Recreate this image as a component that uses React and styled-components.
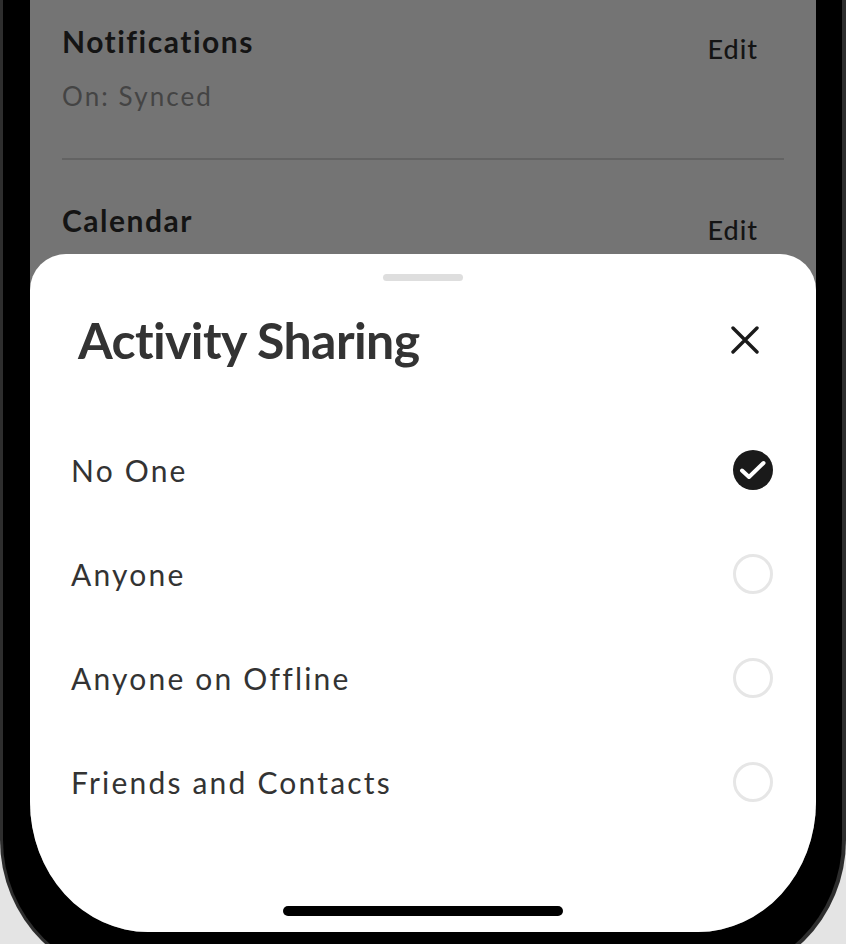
import styled, { createGlobalStyle } from "styled-components";

const GlobalStyle = createGlobalStyle`
  html, body {
    margin: 0;
    padding: 0;
    background: #e4e4e4;
    overflow: hidden;
    font-family: "Lato", "Noto Sans", sans-serif;
  }
`;

const Phone = styled.div`
  width: 846px;
  height: 983px;
  box-sizing: border-box;
  padding: 0 4px 4px 3px;
  background: #2e2e2e;
  border-radius: 0 0 143px 143px;
`;

const Bezel = styled.div`
  height: 100%;
  box-sizing: border-box;
  padding: 0 26px 47px 27px;
  background: #000;
  border-radius: 0 0 139px 139px;
`;

const Screen = styled.div`
  height: 100%;
  display: flex;
  flex-direction: column;
  background: #747474;
  border-radius: 0 0 118px 118px / 0 0 130px 130px;
  overflow: hidden;
`;

const SettingsList = styled.div`
  height: 254px;
  flex-shrink: 0;
  overflow: hidden;
  padding: 0 32px;
`;

const SettingRow = styled.div`
  display: flex;
  justify-content: space-between;
  align-items: flex-start;
  padding-top: ${(props) => props.top}px;
  padding-bottom: ${(props) => props.bottom || 0}px;
  border-bottom: ${(props) => (props.divided ? "2px solid #636363" : "none")};
`;

const SettingTitle = styled.div`
  font-size: 30px;
  font-weight: 700;
  color: #141414;
  letter-spacing: 1.5px;
  line-height: 36px;
`;

const SettingValue = styled.div`
  margin-top: 22px;
  font-size: 26px;
  color: #444;
  letter-spacing: 2.1px;
  line-height: 30px;
`;

const EditLink = styled.div`
  margin-top: ${(props) => props.offset}px;
  margin-right: 26px;
  font-size: 27px;
  font-weight: 500;
  color: #141414;
  letter-spacing: 1px;
  line-height: 32px;
`;

const Sheet = styled.div`
  flex: 1;
  display: flex;
  flex-direction: column;
  background: #fff;
  border-radius: 36px 36px 0 0;
`;

const Grabber = styled.div`
  align-self: center;
  width: 80px;
  height: 7px;
  margin-top: 20px;
  border-radius: 4px;
  background: #dedede;
`;

const SheetHeader = styled.div`
  display: flex;
  align-items: center;
  justify-content: space-between;
  height: 80px;
  margin-top: 19px;
  padding: 0 56px 0 48px;
`;

const SheetTitle = styled.h2`
  margin: 0;
  font-size: 50px;
  font-weight: 700;
  color: #333;
  letter-spacing: -0.6px;
  line-height: 1;
`;

const CloseButton = styled.button`
  border: none;
  background: none;
  padding: 0;
  width: 30px;
  height: 30px;
  display: flex;
  align-items: center;
  justify-content: center;
  cursor: pointer;
`;

const Options = styled.div`
  margin-top: 38px;
  display: flex;
  flex-direction: column;
`;

const OptionRow = styled.div`
  height: 104px;
  display: flex;
  align-items: center;
  justify-content: space-between;
  padding: 0 43px 0 41px;
  cursor: pointer;
`;

const OptionLabel = styled.span`
  font-size: 30px;
  color: #333;
  letter-spacing: 2.2px;
`;

const Radio = styled.div`
  width: 40px;
  height: 40px;
  box-sizing: border-box;
  border-radius: 50%;
  display: flex;
  align-items: center;
  justify-content: center;
  background: ${(props) => (props.checked ? "#1a1a1a" : "transparent")};
  border: ${(props) => (props.checked ? "none" : "3px solid #e6e6e6")};
`;

const HomeIndicator = styled.div`
  align-self: center;
  margin-top: auto;
  margin-bottom: 16px;
  width: 280px;
  height: 10px;
  border-radius: 5px;
  background: #000;
`;

const options = ["No One", "Anyone", "Anyone on Offline", "Friends and Contacts"];

const CloseIcon = () => (
  <svg width="28" height="28" viewBox="0 0 28 28">
    <path d="M2 2 L26 26 M26 2 L2 26" stroke="#1a1a1a" strokeWidth="3.4" strokeLinecap="round" />
  </svg>
);

const CheckIcon = () => (
  <svg width="28" height="22" viewBox="0 0 28 22">
    <path d="M3 11.5 L10 18 L24.5 4" fill="none" stroke="#fff" strokeWidth="4" strokeLinecap="round" strokeLinejoin="round" />
  </svg>
);

const App = () => {
  const selected = "No One";

  return (
    <>
      <GlobalStyle />
      <Phone>
        <Bezel>
          <Screen>
            <SettingsList>
              <SettingRow top={23} bottom={47} divided>
                <div>
                  <SettingTitle>Notifications</SettingTitle>
                  <SettingValue>On: Synced</SettingValue>
                </div>
                <EditLink offset={10}>Edit</EditLink>
              </SettingRow>
              <SettingRow top={42}>
                <SettingTitle>Calendar</SettingTitle>
                <EditLink offset={12}>Edit</EditLink>
              </SettingRow>
            </SettingsList>
            <Sheet>
              <Grabber />
              <SheetHeader>
                <SheetTitle>Activity Sharing</SheetTitle>
                <CloseButton>
                  <CloseIcon />
                </CloseButton>
              </SheetHeader>
              <Options>
                {options.map((item) => (
                  <OptionRow key={item}>
                    <OptionLabel>{item}</OptionLabel>
                    <Radio checked={item === selected}>
                      {item === selected ? <CheckIcon /> : null}
                    </Radio>
                  </OptionRow>
                ))}
              </Options>
              <HomeIndicator />
            </Sheet>
          </Screen>
        </Bezel>
      </Phone>
    </>
  );
};

export default App;
